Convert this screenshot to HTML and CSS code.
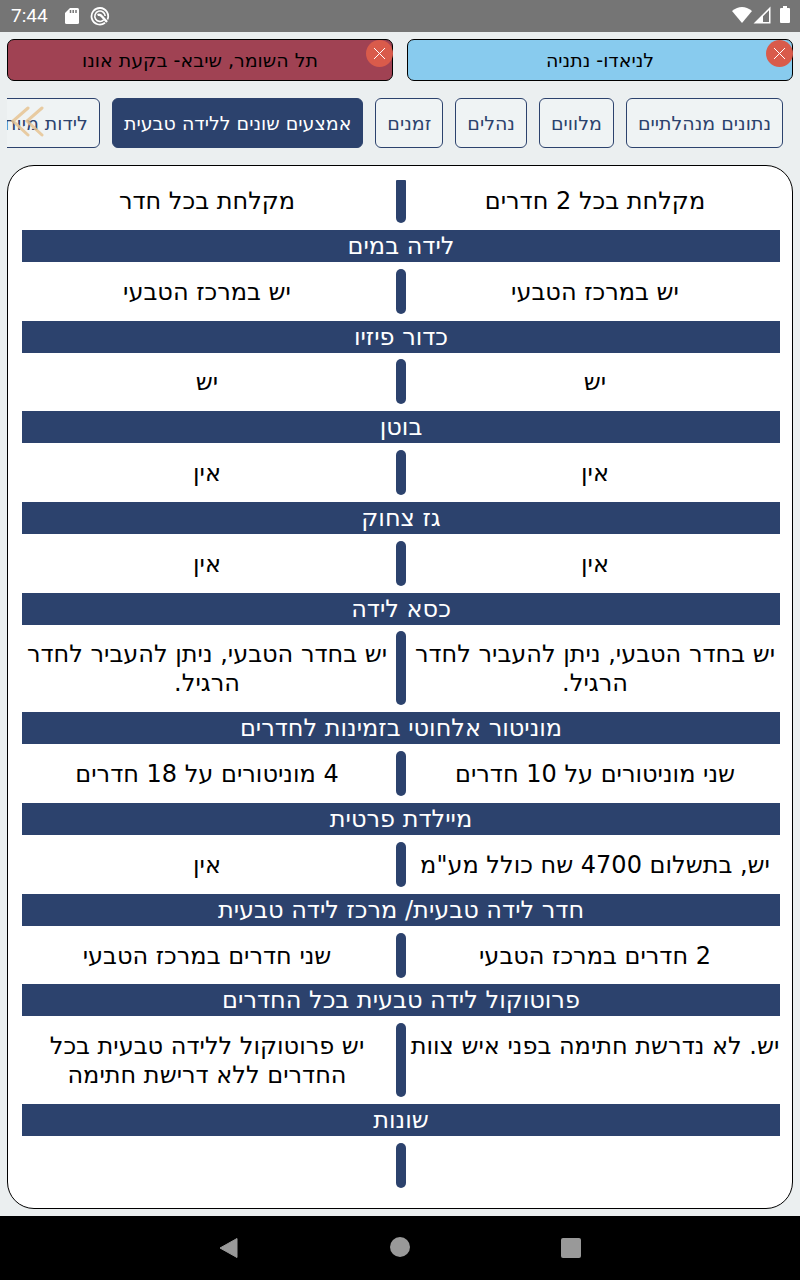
FILE: index.html
```html
<!DOCTYPE html>
<html lang="he" dir="rtl">
<head>
<meta charset="utf-8">
<meta name="viewport" content="width=device-width, initial-scale=1">
<title>השוואת בתי חולים</title>
<link rel="stylesheet" href="styles.css">
</head>
<body>
<header class="status" dir="ltr">
  <span class="clock">7:44</span>
  <svg class="status-icon" width="16" height="20" viewBox="0 0 16 20"><path fill="#fff" d="M6 2h7.500a1.500 1.500 0 0 1 1.500 1.500v13a1.500 1.500 0 0 1-1.500 1.500h-11A1.500 1.500 0 0 1 1 16.500V7z"/><path stroke="#757575" stroke-width="1.500" d="M6.500 4v3M9.200 4v3M12 4v3"/></svg>
  <svg class="status-icon" width="20" height="20" viewBox="0 0 20 20"><g fill="none" stroke="#fff"><path stroke-width="1.800" d="M15 16.800A8.300 8.300 0 1 1 17.500 13.500"/><path stroke-width="1.600" d="M13.800 13.800A5.200 5.200 0 1 1 15.200 10"/><path stroke-width="2.400" d="M7.500 9q2.500-1 4.500 1.500l5 5.500"/></g></svg>
  <span class="spacer"></span>
  <svg width="60" height="20" viewBox="0 0 60 20"><path fill="#fff" d="M1 5Q11 -3 21 5L11 17z"/><path fill="#fff" fill-rule="evenodd" d="M22.500 17.500L39.500 .500v17zM32 16h6V4.300l-6 6z"/><path fill="#fff" d="M52 0h4v2h2a1 1 0 0 1 1 1v13a1 1 0 0 1-1 1h-8a1 1 0 0 1-1-1V3a1 1 0 0 1 1-1h2z"/></svg>
</header>
<main class="screen">
  <section class="hospitals">
    <div class="hospital hospital-blue"><span>לניאדו- נתניה</span><button class="close" aria-label="הסרת לניאדו"><svg width="27" height="27" viewBox="0 0 27 27"><path d="M8 8l11 11M19 8L8 19" stroke="#fff"/></svg></button></div>
    <div class="hospital hospital-red"><span>תל השומר, שיבא- בקעת אונו</span><button class="close" aria-label="הסרת תל השומר"><svg width="27" height="27" viewBox="0 0 27 27"><path d="M8 8l11 11M19 8L8 19" stroke="#fff"/></svg></button></div>
  </section>
  <nav class="tabs-wrap">
    <div class="tabs">
      <button class="tab">נתונים מנהלתיים</button>
      <button class="tab">מלווים</button>
      <button class="tab">נהלים</button>
      <button class="tab">זמנים</button>
      <button class="tab tab-active">אמצעים שונים ללידה טבעית</button>
      <button class="tab">לידות מיוחדות</button>
    </div>
    <svg class="more" width="34" height="34" viewBox="0 0 34 34"><path d="M18 3L3 16l15 14M32 3L17 16l15 14" fill="none" stroke="#e6c392" stroke-opacity=".85" stroke-width="3" stroke-linecap="round"/></svg>
  </nav>
  <section class="card">
    <table class="compare">
      <tbody>
        <tr class="values values-first"><td>מקלחת בכל 2 חדרים</td><td class="divider"></td><td>מקלחת בכל חדר</td></tr>
        <tr class="topic"><th colspan="3">לידה במים</th></tr>
        <tr class="values"><td>יש במרכז הטבעי</td><td class="divider"></td><td>יש במרכז הטבעי</td></tr>
        <tr class="topic"><th colspan="3">כדור פיזיו</th></tr>
        <tr class="values"><td>יש</td><td class="divider"></td><td>יש</td></tr>
        <tr class="topic"><th colspan="3">בוטן</th></tr>
        <tr class="values"><td>אין</td><td class="divider"></td><td>אין</td></tr>
        <tr class="topic"><th colspan="3">גז צחוק</th></tr>
        <tr class="values"><td>אין</td><td class="divider"></td><td>אין</td></tr>
        <tr class="topic"><th colspan="3">כסא לידה</th></tr>
        <tr class="values"><td>יש בחדר הטבעי, ניתן להעביר לחדר הרגיל.</td><td class="divider"></td><td>יש בחדר הטבעי, ניתן להעביר לחדר הרגיל.</td></tr>
        <tr class="topic"><th colspan="3">מוניטור אלחוטי בזמינות לחדרים</th></tr>
        <tr class="values"><td>שני מוניטורים על 10 חדרים</td><td class="divider"></td><td>4 מוניטורים על 18 חדרים</td></tr>
        <tr class="topic"><th colspan="3">מיילדת פרטית</th></tr>
        <tr class="values"><td>יש, בתשלום 4700 שח כולל מע"מ</td><td class="divider"></td><td>אין</td></tr>
        <tr class="topic"><th colspan="3">חדר לידה טבעית/ מרכז לידה טבעית</th></tr>
        <tr class="values"><td>2 חדרים במרכז הטבעי</td><td class="divider"></td><td>שני חדרים במרכז הטבעי</td></tr>
        <tr class="topic"><th colspan="3">פרוטוקול לידה טבעית בכל החדרים</th></tr>
        <tr class="values"><td>יש. לא נדרשת חתימה בפני איש צוות</td><td class="divider"></td><td>יש פרוטוקול ללידה טבעית בכל החדרים ללא דרישת חתימה</td></tr>
        <tr class="topic"><th colspan="3">שונות</th></tr>
        <tr class="values"><td></td><td class="divider"></td><td></td></tr>
      </tbody>
    </table>
  </section>
</main>
<footer class="navbar" dir="ltr">
  <button class="nav-key" aria-label="חזרה"><svg width="22" height="22" viewBox="0 0 22 22"><path d="M2 11L19 1.500v19z" fill="#999" stroke="#999" stroke-linejoin="round"/></svg></button>
  <button class="nav-key" aria-label="בית"><svg width="22" height="22" viewBox="0 0 22 22"><circle cx="11" cy="10" r="10" fill="#999"/></svg></button>
  <button class="nav-key" aria-label="אחרונים"><svg width="22" height="22" viewBox="0 0 22 22"><rect x="1" y="1" width="20" height="20" rx="2" fill="#999"/></svg></button>
</footer>
</body>
</html>
```
FILE: styles.css
```css
* { box-sizing: border-box; }
body {
  margin: 0;
  min-height: 100vh;
  display: flex;
  flex-direction: column;
  background: #ebeff0;
  color: #000;
  font-family: "DejaVu Sans", sans-serif;
}
button { font: inherit; cursor: pointer; }
svg { display: block; }

.status {
  height: 32px;
  display: flex;
  align-items: center;
  padding: 0 9px 0 11px;
  background: #757575;
  color: #fff;
  font: 19px/32px Roboto, sans-serif;
}
.clock { margin-right: 16px; }
.status-icon { margin-right: 10px; }
.spacer { flex: 1; }

.screen {
  flex: 1;
  display: flex;
  flex-direction: column;
  padding: 7px;
}
.hospitals { display: flex; gap: 14px; }
.hospital {
  flex: 1;
  position: relative;
  height: 42px;
  border: 1px solid #000;
  border-radius: 7px;
  text-align: center;
  font-size: 19px;
  line-height: 40px;
}
.hospital-blue { background: #88cbee; }
.hospital-red { background: #a04253; }
.close {
  position: absolute;
  top: 0;
  right: -1px;
  width: 27px;
  height: 27px;
  padding: 0;
  border: 0;
  border-radius: 50%;
  background: #d95b4b;
}

.tabs-wrap { position: relative; margin: 17px 0; }
.tabs {
  display: flex;
  gap: 12px;
  padding-right: 10px;
  overflow: hidden;
}
.tab {
  flex: none;
  height: 50px;
  padding: 0 11px;
  border: 1px solid #2c426d;
  border-radius: 6px;
  background: #eff3f4;
  color: #2c426d;
  font-size: 19px;
}
.tab-active { background: #2c426d; color: #fff; }
.more { position: absolute; left: 3px; top: 7px; }

.card {
  flex: 1;
  display: flex;
  padding: 14px 12px 20px 14px;
  border: 1px solid #000;
  border-radius: 27px;
  background: #fff;
}
.compare { flex: 1; display: flex; }
.compare tbody {
  flex: 1;
  display: flex;
  flex-direction: column;
  justify-content: space-between;
}
.topic { display: flex; background: #2c426d; color: #fff; }
.topic th {
  flex: 1;
  padding: 0;
  font-size: 24px;
  font-weight: 400;
  line-height: 32px;
}
.values {
  display: grid;
  grid-template-columns: 1fr 10px 1fr;
  column-gap: 4px;
  min-height: 45px;
}
.values td {
  padding: 9px 0 7px;
  text-align: center;
  font-size: 24px;
  line-height: 29px;
}
.values-first td { padding: 7px 0; }
.values-first { min-height: 43px; }
.values .divider { padding: 0; border-radius: 5px; background: #2c426d; }
.values-first .divider { border-radius: 1px 1px 5px 5px; }

.navbar {
  height: 64px;
  display: flex;
  justify-content: center;
  align-items: center;
  gap: 149px;
  background: #000;
}
.nav-key { padding: 0; border: 0; background: none; }
```
